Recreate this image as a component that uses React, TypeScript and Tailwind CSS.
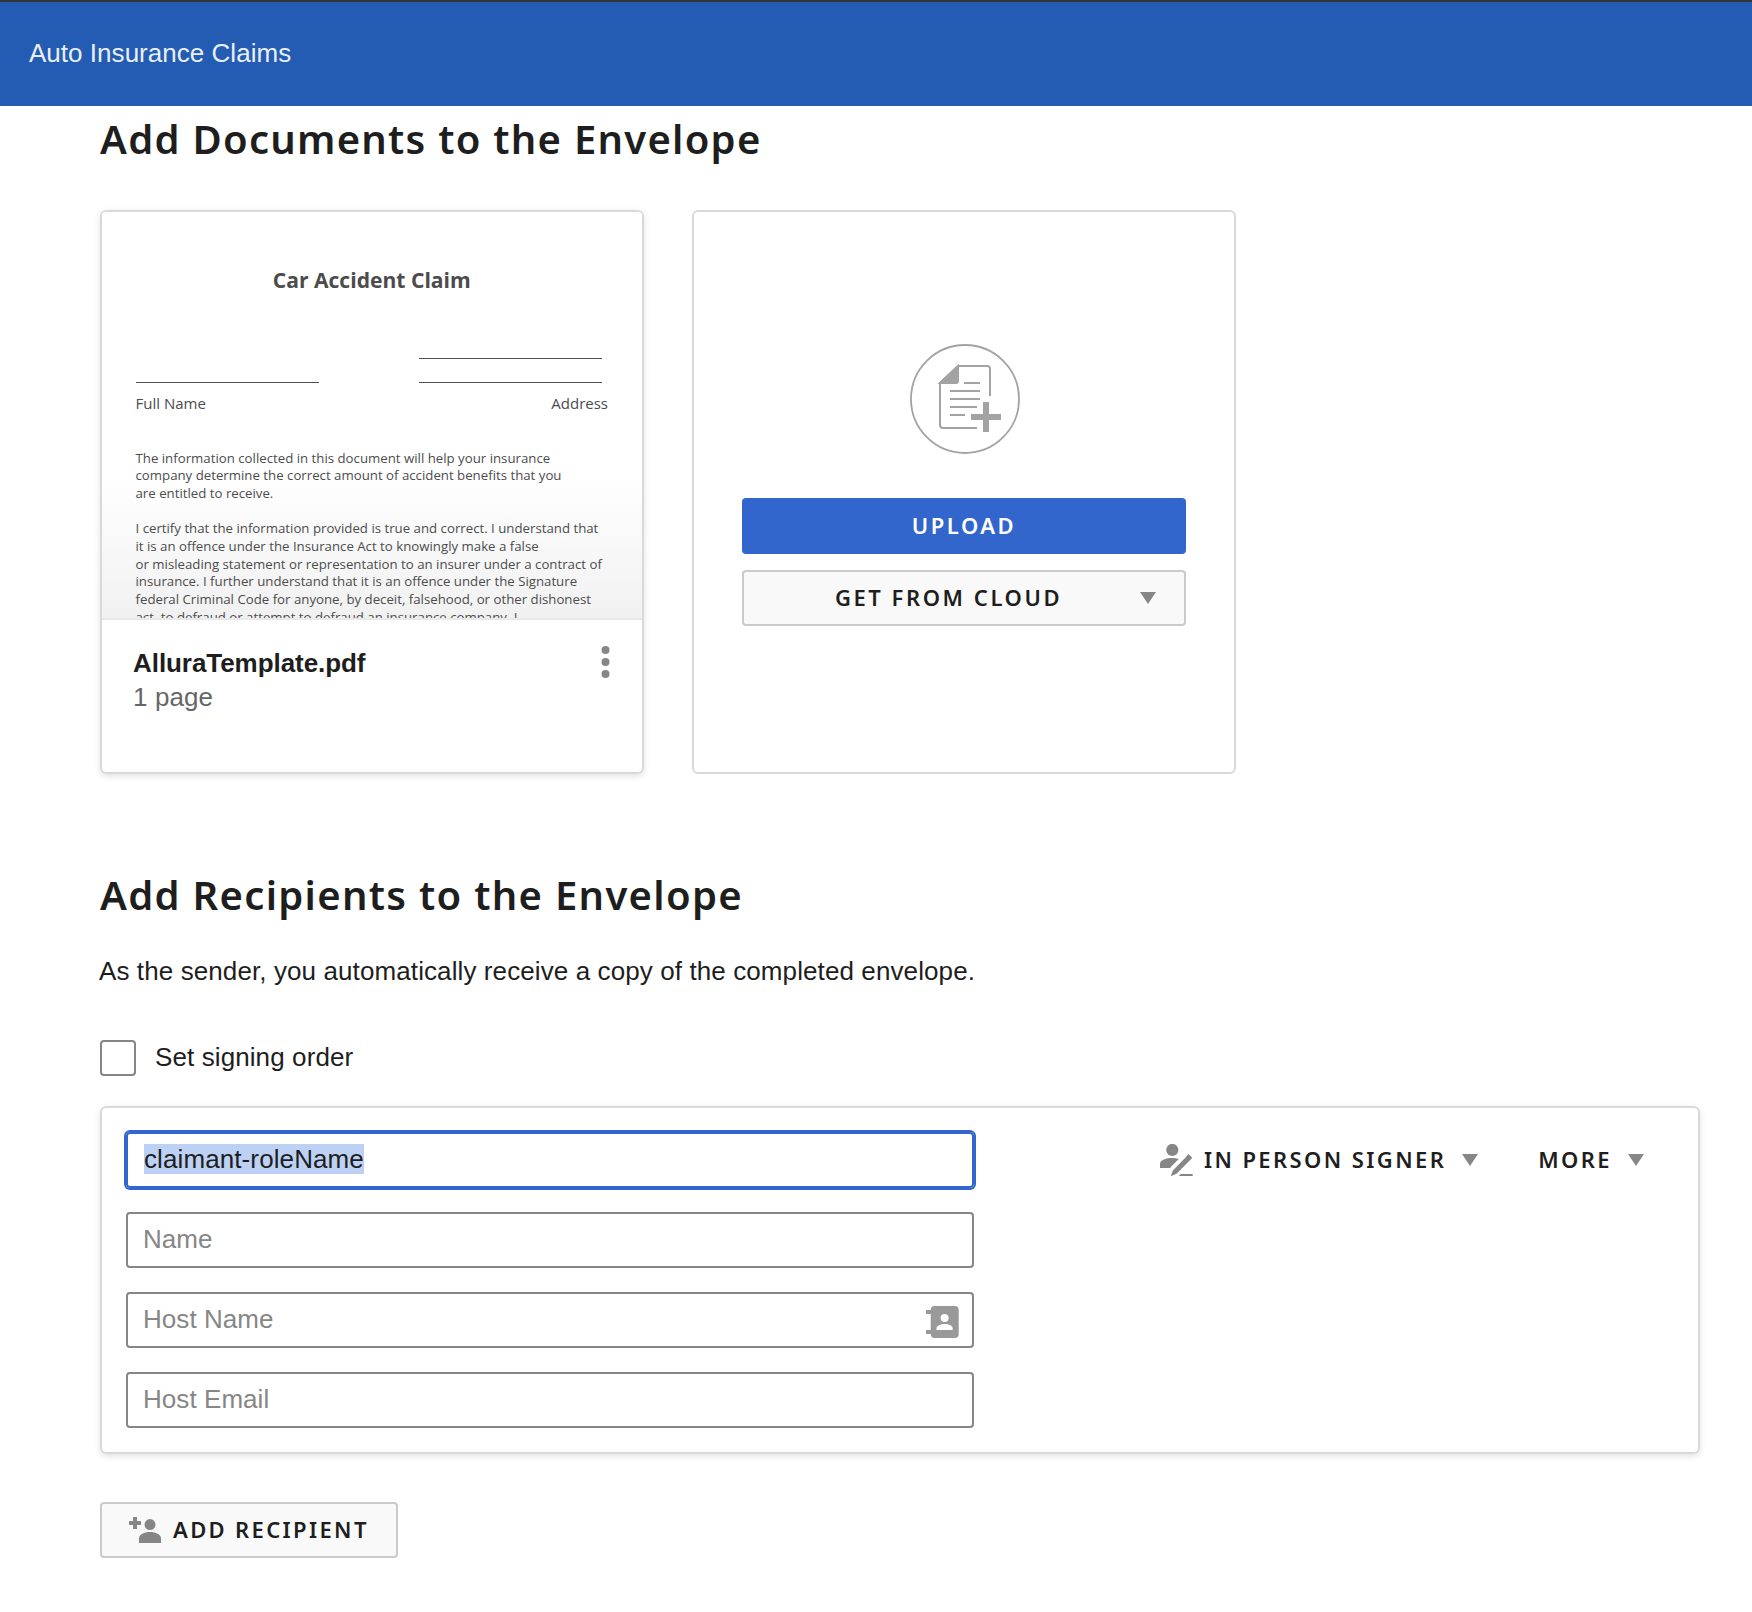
import type { ReactNode } from 'react';

const Caret = () => (
  <svg width="16" height="12" viewBox="0 0 16 12" className="shrink-0">
    <path d="M0 0h16L8 12z" fill="#868686" />
  </svg>
);

const DocumentPlusIcon = () => (
  <svg width="110" height="110" viewBox="0 0 110 110" fill="none" stroke="#a3a3a3" strokeWidth="2" className="ml-[2px]">
    <circle cx="55" cy="55" r="54" strokeWidth="1.8" />
    <path d="M80 52V25a3 3 0 0 0-3-3H48L30 39v42a3 3 0 0 0 3 3h34" />
    <path d="M48 22v15a2 2 0 0 1-2 2H30z" fill="#a3a3a3" />
    <path d="M54 39h16M40 47h30M40 55h30M40 63h27M40 71h15" />
    <path d="M76 58v30M61 73h30" strokeWidth="6" />
  </svg>
);

const SignerIcon = () => (
  <svg width="33" height="33" viewBox="0 0 33 33" fill="#868686" className="shrink-0">
    <circle cx="12.3" cy="6" r="6.1" />
    <path d="M0 24v-4.200C0 16 6.500 14 12.300 14c2.400 0 4.600.3 6.400.9L10.600 23.200V24z" />
    <path d="M28.600 10l3.700 3.700-3.600 3.700L16.500 29.800 10.700 32.300 12.900 26.400 25.300 13.800z" />
    <path d="M20.700 30h12v2h-14z" />
  </svg>
);

const AddressBookIcon = () => (
  <svg width="33" height="32" viewBox="0 0 33 32" className="mt-1 shrink-0">
    <path d="M0 4h6v4H0zM0 24h6v4H0z" fill="#999" />
    <rect x="4.700" width="28" height="32" rx="4" fill="#999" />
    <circle cx="18.600" cy="12" r="4" fill="#fff" />
    <path d="M10.500 24v-1.500c0-3 4-4.500 8.100-4.500s8.100 1.500 8.100 4.500V24z" fill="#fff" />
  </svg>
);

const AddPersonIcon = () => (
  <svg width="32" height="26" viewBox="0 0 32 26" fill="#868686" className="mb-px shrink-0">
    <path d="M4 0h4v4h4v4H8v4H4V8H0V4h4z" />
    <circle cx="21" cy="7.600" r="5.500" />
    <path d="M10 26v-4.500c0-4.200 5.500-6.500 11-6.500s11 2.300 11 6.500V26z" />
  </svg>
);

const label = "pb-0.5 font-['Noto_Sans',sans-serif] text-[22px] leading-8 font-semibold whitespace-nowrap";

function SectionTitle({ children, className }: { children: ReactNode; className: string }) {
  return (
    <h2 className={`font-['Noto_Sans',sans-serif] text-[40px] leading-[56px] font-semibold whitespace-nowrap ${className}`}>
      {children}
    </h2>
  );
}

function Field({ placeholder, icon }: { placeholder: string; icon?: ReactNode }) {
  return (
    <div className="flex h-14 items-center justify-between rounded border-2 border-[#868686] pr-[13px] pl-[15px] tracking-[0.06px] text-[#868686]">
      <span className="pb-0.5">{placeholder}</span>
      {icon}
    </div>
  );
}

function DocumentPreview() {
  return (
    <div className="h-[408px] overflow-hidden border-b-2 border-[#e9e9e9] bg-linear-to-b from-white from-65% to-[#f1f1f1] pt-[54px] pr-[34px] pl-[33.5px] font-['Open_Sans',sans-serif] text-[#4c4c4c]">
      <h3 className="text-center text-[21.1px] leading-7 font-bold">Car Accident Claim</h3>
      <div className="mt-[63px] flex h-[26px] items-end justify-between pr-[6px]">
        <div className="w-[183px] border-b-[1.5px] border-[#505050]" />
        <div className="h-[25px] w-[183px] border-y-[1.5px] border-[#505050]" />
      </div>
      <div className="mt-[10px] flex justify-between text-[15px] leading-5">
        <span>Full Name</span>
        <span>Address</span>
      </div>
      <div className="mt-[36.5px] text-[13.24px] leading-[17.67px] whitespace-nowrap">
        <p>
          The information collected in this document will help your insurance
          <br />
          company determine the correct amount of accident benefits that you
          <br />
          are entitled to receive.
        </p>
        <p className="mt-[17.67px]">
          I certify that the information provided is true and correct. I understand that
          <br />
          it is an offence under the Insurance Act to knowingly make a false
          <br />
          or misleading statement or representation to an insurer under a contract of
          <br />
          insurance. I further understand that it is an offence under the Signature
          <br />
          federal Criminal Code for anyone, by deceit, falsehood, or other dishonest
          <br />
          act, to defraud or attempt to defraud an insurance company. I
        </p>
      </div>
    </div>
  );
}

export default function App() {
  return (
    <div className="min-h-screen bg-white font-['Liberation_Sans',Arial,sans-serif] text-[26px] leading-8 tracking-[0.1px] text-[#1e1e1e]">
      <header className="flex h-[106px] items-center border-t-2 border-[#333638] bg-[#235cb2] pb-0.5 pl-[29px] tracking-[0.03px] text-[#e9eff8]">
        Auto Insurance Claims
      </header>

      <main className="pt-[5px] pr-[52px] pl-[100px]">
        <SectionTitle className="tracking-[1.26px]">Add Documents to the Envelope</SectionTitle>

        <div className="mt-[43px] flex gap-12">
          <article className="h-[564px] w-[544px] overflow-hidden rounded-md border-2 border-[#d9d9d9] tracking-normal shadow-[0_2px_6px_rgba(0,0,0,0.12)]">
            <DocumentPreview />
            <div className="flex items-start justify-between pt-[26px] pr-[32px] pl-[31px] leading-[34px]">
              <div>
                <div className="font-bold tracking-[-0.06px]">AlluraTemplate.pdf</div>
                <div className="tracking-[0.1px] text-[#666]">1 page</div>
              </div>
              <svg width="9" height="32" viewBox="0 0 9 32" fill="#868686">
                <circle cx="4.500" cy="4" r="4" />
                <circle cx="4.500" cy="16" r="4" />
                <circle cx="4.500" cy="28" r="4" />
              </svg>
            </div>
          </article>

          <div className="flex h-[564px] w-[544px] flex-col items-center rounded-md border-2 border-[#d9d9d9] px-12 pt-[132px]">
            <DocumentPlusIcon />
            <button className={`mt-11 h-14 w-full rounded bg-[#3366cc] tracking-[2.5px] text-white ${label}`}>UPLOAD</button>
            <button className="mt-4 flex h-14 w-full items-center rounded border-2 border-[#cbcbcb] bg-[#f9f9f9] pr-7 pl-[13px]">
              <span className={`flex-1 text-center tracking-[2.55px] ${label}`}>GET FROM CLOUD</span>
              <Caret />
            </button>
          </div>
        </div>

        <SectionTitle className="mt-[93px] tracking-[1.3px]">Add Recipients to the Envelope</SectionTitle>
        <p className="mt-8 -ml-px">As the sender, you automatically receive a copy of the completed envelope.</p>

        <div className="mt-[53px] flex h-9 items-center gap-[19px]">
          <div className="size-9 rounded border-2 border-[#868686]" />
          <span className="pb-0.5">Set signing order</span>
        </div>

        <section className="mt-[30px] flex items-start justify-between rounded-md border-2 border-[#d9d9d9] p-6 shadow-[0_2px_6px_rgba(0,0,0,0.12)]">
          <div className="flex w-[848px] flex-col gap-6">
            <div className="flex h-14 items-center rounded border-2 border-[#3366cc] pb-0.5 pl-4 shadow-[0_0_0_2px_#3366cc]">
              <span className="bg-[#bdd1f5] leading-[30px]">claimant-roleName</span>
            </div>
            <Field placeholder="Name" />
            <Field placeholder="Host Name" icon={<AddressBookIcon />} />
            <Field placeholder="Host Email" />
          </div>
          <div className="flex h-14 items-center pr-[30px]">
            <SignerIcon />
            <span className={`mr-[16px] ml-[11px] tracking-[2.4px] ${label}`}>IN PERSON SIGNER</span>
            <Caret />
            <span className={`mr-[16px] ml-[60px] tracking-[2.4px] ${label}`}>MORE</span>
            <Caret />
          </div>
        </section>

        <button className="mt-12 flex h-14 w-[298px] items-center rounded border-2 border-[#cbcbcb] bg-[#f9f9f9] pl-[27px]">
          <AddPersonIcon />
          <span className={`ml-[12px] tracking-[2.35px] ${label}`}>ADD RECIPIENT</span>
        </button>
      </main>
    </div>
  );
}
